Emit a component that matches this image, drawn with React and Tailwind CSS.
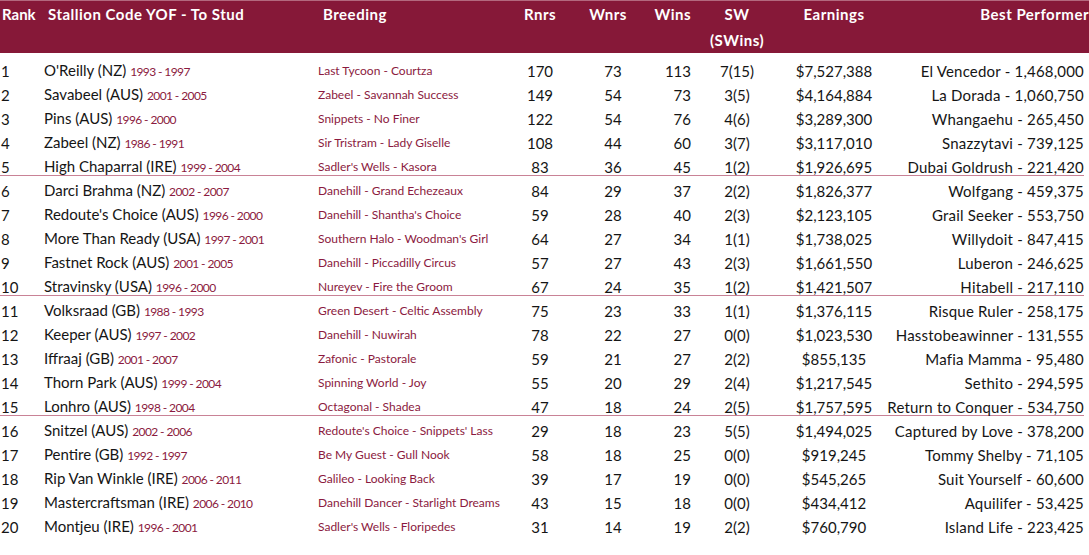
import React from "react";

const rows = [
  ["1", "O'Reilly (NZ)", "1993 - 1997", "Last Tycoon - Courtza", "170", "73", "113", "7(15)", "$7,527,388", "El Vencedor - 1,468,000"],
  ["2", "Savabeel (AUS)", "2001 - 2005", "Zabeel - Savannah Success", "149", "54", "73", "3(5)", "$4,164,884", "La Dorada - 1,060,750"],
  ["3", "Pins (AUS)", "1996 - 2000", "Snippets - No Finer", "122", "54", "76", "4(6)", "$3,289,300", "Whangaehu - 265,450"],
  ["4", "Zabeel (NZ)", "1986 - 1991", "Sir Tristram - Lady Giselle", "108", "44", "60", "3(7)", "$3,117,010", "Snazzytavi - 739,125"],
  ["5", "High Chaparral (IRE)", "1999 - 2004", "Sadler's Wells - Kasora", "83", "36", "45", "1(2)", "$1,926,695", "Dubai Goldrush - 221,420"],
  ["6", "Darci Brahma (NZ)", "2002 - 2007", "Danehill - Grand Echezeaux", "84", "29", "37", "2(2)", "$1,826,377", "Wolfgang - 459,375"],
  ["7", "Redoute's Choice (AUS)", "1996 - 2000", "Danehill - Shantha's Choice", "59", "28", "40", "2(3)", "$2,123,105", "Grail Seeker - 553,750"],
  ["8", "More Than Ready (USA)", "1997 - 2001", "Southern Halo - Woodman's Girl", "64", "27", "34", "1(1)", "$1,738,025", "Willydoit - 847,415"],
  ["9", "Fastnet Rock (AUS)", "2001 - 2005", "Danehill - Piccadilly Circus", "57", "27", "43", "2(3)", "$1,661,550", "Luberon - 246,625"],
  ["10", "Stravinsky (USA)", "1996 - 2000", "Nureyev - Fire the Groom", "67", "24", "35", "1(2)", "$1,421,507", "Hitabell - 217,110"],
  ["11", "Volksraad (GB)", "1988 - 1993", "Green Desert - Celtic Assembly", "75", "23", "33", "1(1)", "$1,376,115", "Risque Ruler - 258,175"],
  ["12", "Keeper (AUS)", "1997 - 2002", "Danehill - Nuwirah", "78", "22", "27", "0(0)", "$1,023,530", "Hasstobeawinner - 131,555"],
  ["13", "Iffraaj (GB)", "2001 - 2007", "Zafonic - Pastorale", "59", "21", "27", "2(2)", "$855,135", "Mafia Mamma - 95,480"],
  ["14", "Thorn Park (AUS)", "1999 - 2004", "Spinning World - Joy", "55", "20", "29", "2(4)", "$1,217,545", "Sethito - 294,595"],
  ["15", "Lonhro (AUS)", "1998 - 2004", "Octagonal - Shadea", "47", "18", "24", "2(5)", "$1,757,595", "Return to Conquer - 534,750"],
  ["16", "Snitzel (AUS)", "2002 - 2006", "Redoute's Choice - Snippets' Lass", "29", "18", "23", "5(5)", "$1,494,025", "Captured by Love - 378,200"],
  ["17", "Pentire (GB)", "1992 - 1997", "Be My Guest - Gull Nook", "58", "18", "25", "0(0)", "$919,245", "Tommy Shelby - 71,105"],
  ["18", "Rip Van Winkle (IRE)", "2006 - 2011", "Galileo - Looking Back", "39", "17", "19", "0(0)", "$545,265", "Suit Yourself - 60,600"],
  ["19", "Mastercraftsman (IRE)", "2006 - 2010", "Danehill Dancer - Starlight Dreams", "43", "15", "18", "0(0)", "$434,412", "Aquilifer - 53,425"],
  ["20", "Montjeu (IRE)", "1996 - 2001", "Sadler's Wells - Floripedes", "31", "14", "19", "2(2)", "$760,790", "Island Life - 223,425"],
];

function elRow(r) {
  return (
    <div className="flex h-[24px] items-center leading-[24px] whitespace-nowrap" key={r[0]}>
      <div className="w-[44px] pl-px text-[15px]">{r[0]}</div>
      <div className="w-[274px] text-[15px]">
        {r[1]} <span className="text-[12px] tracking-[-0.6px] text-[#8b1a40]">{r[2]}</span>
      </div>
      <div className="w-[182px] text-[12px] text-[#8b1a40]">{r[3]}</div>
      <div className="w-[80px] text-center text-[15px]">{r[4]}</div>
      <div className="w-[66px] text-center text-[15px]">{r[5]}</div>
      <div className="w-[45px] text-right text-[15px]">{r[6]}</div>
      <div className="w-[92px] text-center text-[15px]">{r[7]}</div>
      <div className="w-[102px] text-center text-[15px]">{r[8]}</div>
      <div className="w-[204px] pr-[5px] text-right text-[15px] tracking-[0.2px]">{r[9]}</div>
    </div>
  );
}

export default function App() {
  const groups = [rows.slice(0, 5), rows.slice(5, 10), rows.slice(10, 15), rows.slice(15, 20)];

  return (
    <div className="w-[1089px] h-[555px] bg-white text-[#151515] overflow-hidden" style={{ fontFamily: "Lato, 'Noto Sans', sans-serif" }}>
      <header className="flex h-[53px] bg-[#861838] border-t border-[#b3687e] text-white font-bold text-[15px] tracking-[0.5px] leading-[26px] whitespace-nowrap">
        <div className="w-[44px] pl-[2px] tracking-normal">Rank</div>
        <div className="w-[274px] pl-[4px]">Stallion Code YOF - To Stud</div>
        <div className="w-[182px] pl-[5px]">Breeding</div>
        <div className="w-[80px] text-center">Rnrs</div>
        <div className="w-[66px] text-center pr-[10px]">Wnrs</div>
        <div className="w-[45px] text-right">Wins</div>
        <div className="w-[92px] text-center">
          SW
          <br />
          (SWins)
        </div>
        <div className="w-[102px] text-center">Earnings</div>
        <div className="w-[204px] text-right">Best Performer</div>
      </header>
      <main className="mt-[6px]">
        {groups.map((g, i) => (
          <section key={i}>
            {g.map((r) => elRow(r))}
            {i < 3 && <div className="h-px bg-[#c98296] -mt-[4px] mb-[3px] w-[1084px]" />}
          </section>
        ))}
      </main>
    </div>
  );
}
